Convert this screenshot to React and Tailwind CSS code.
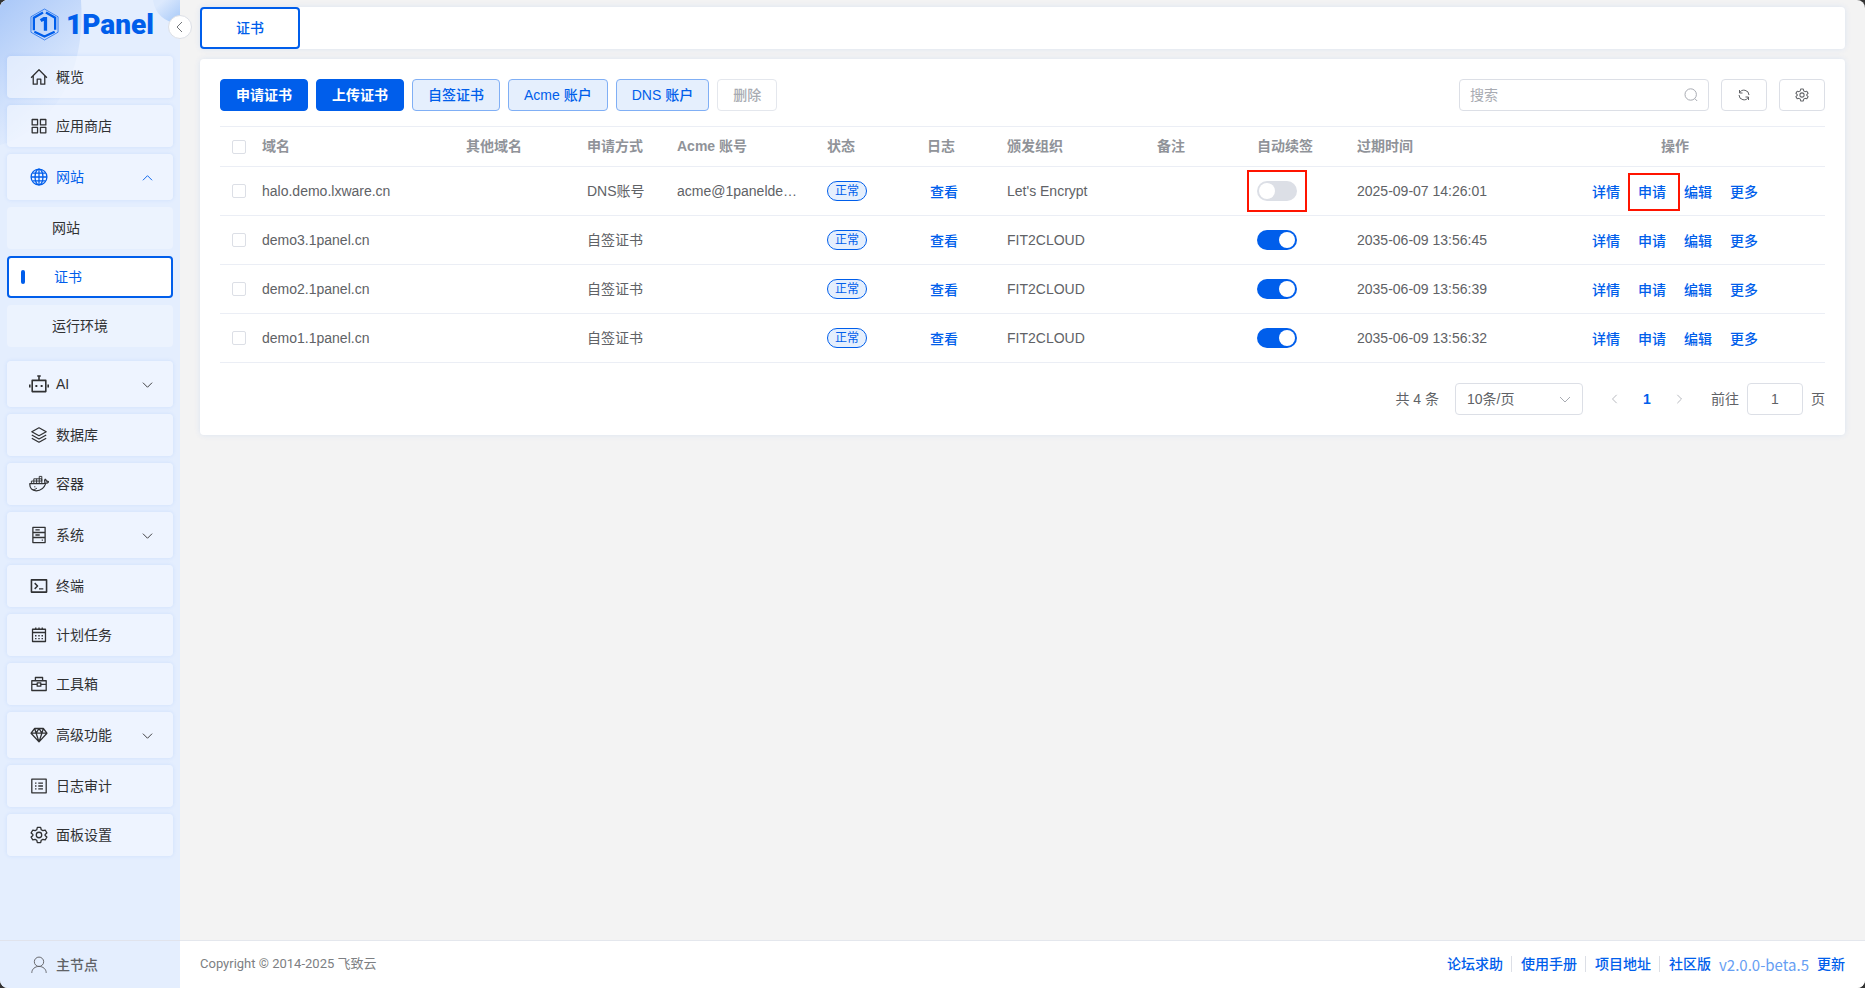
import React, { useState } from 'react';

// Path data for the sidebar icons, all on a 24x24 grid
const icons = {
  home: <path d="M1 13 12 2l11 11M4 10.500V22h5.500v-7h5v7H20V10.500" />,
  apps: <path d="M2.500 3h7.500v7.500H2.500zM14 3h7.500v7.500H14zM2.500 14H10v7.500H2.500zM14 14h7.500v7.500H14z" />,
  globe: (
    <>
      <circle cx="12" cy="12" r="11" />
      <ellipse cx="12" cy="12" rx="5.500" ry="11" />
      <path d="M12 1v22M1 12h22M3 6.500h18M3 17.500h18" />
    </>
  ),
  robot: (
    <>
      <path d="M3.500 7.500h17v14h-17zM12 7.500V2M9.800 2h4.400M0.500 12.500v4M23.500 12.500v4" strokeWidth="2" />
      <path d="M7.500 14.500h2.400M14.100 14.500h2.400" strokeWidth="2.600" />
    </>
  ),
  layers: <path d="M12 2 22 7.500 12 13 2 7.500zM2 12l10 5.500L22 12M2 16.500 12 22l10-5.500" />,
  docker: (
    <>
      <path d="M.5 11.500h17c1.200 0 2-.7 2-2-.8-1.200-.6-2.400.3-3.500 1 .6 1.500 1.400 1.600 2.500 1-.2 1.800 0 2.600.6-.6 1.400-1.800 1.900-3.400 1.800C18.500 17 14.500 20.500 8.500 20.500c-5 0-8.300-3.500-8-9z" strokeWidth="1.500" />
      <path d="M2.500 8.300h13v3h-13zM5.500 5.500h10v3M5.500 5.500v6M9 5.500v6M12.300 2.500v9M12.300 2.500h3.200v6" strokeWidth="1.200" />
      <path d="M6 15.500h1.500M3 19c3 .3 5-.5 6.500-2" strokeWidth="1.200" />
    </>
  ),
  server: (
    <>
      <path d="M3.500 1.500h17v21h-17zM3.500 8.500h17M3.500 15.500h17M7 5h6M7 12h6" />
      <path d="M15.800 19h1.600" />
    </>
  ),
  terminal: (
    <>
      <path d="M1.500 3.500h21v17h-21z" strokeWidth="2.200" />
      <path d="m6 8 4 4-4 4M12 16h6" strokeWidth="2" />
    </>
  ),
  calendar: (
    <>
      <path d="M3 4h18v17H3zM3 8.500h18M7.500 1.500V5M12 1.500V5M16.500 1.500V5" />
      <path d="M6.500 13h2M11 13h2M15.500 13h2M6.500 17h2M11 17h2M15.500 17h2" strokeWidth="2" />
    </>
  ),
  toolbox: <path d="M2 7.500h20V21H2zM7 7.500V3h10v4.500M2 12.500h7.500M14.500 12.500H22M9.500 10.500h5v4.500h-5z" />,
  diamond: <path d="M6 3h12l5 6.500L12 21.500 1 9.500zM1 9.500h22M8 9.500 12 21.500l4-12M6 3l2 6.500L12 3l4 6.500L18 3" />,
  logs: (
    <>
      <path d="M2 2.500h20v19H2z" />
      <path d="M11 8h6.500M11 12h6.500M11 16h6.500M6.500 8h2M6.500 12h2M6.500 16h2" />
    </>
  ),
  gear: (
    <>
      <path d="m9.700 1.500-.8 3.200-2.300 1.300-3.200-.9-2.300 4 2.400 2.200v1.400L1.100 14.900l2.300 4 3.200-.9 2.300 1.300.8 3.200h4.600l.8-3.200 2.300-1.300 3.200.9 2.300-4-2.400-2.200v-1.400l2.400-2.200-2.300-4-3.200.9-2.300-1.300-.8-3.200z" />
      <circle cx="12" cy="12" r="3.800" />
    </>
  ),
  user: (
    <>
      <circle cx="12" cy="7.500" r="6.500" />
      <path d="M2 23c0-5.500 4.500-9 10-9s10 3.500 10 9" />
    </>
  ),
};

const Icon = ({ name, className = 'size-[18px]', strokeWidth = 1.8 }) => (
  <svg
    viewBox="-0.5 0 25 24"
    className={`${className} shrink-0`}
    fill="none"
    stroke="currentColor"
    strokeWidth={strokeWidth}
    strokeLinejoin="round"
    aria-hidden="true"
  >
    {icons[name]}
  </svg>
);

const Chevron = ({ direction, className = 'size-3' }) => {
  const paths = {
    up: 'M1 9l5-5 5 5',
    down: 'M1 4l5 5 5-5',
    left: 'M8 1L3 6l5 5',
    right: 'M4 1l5 5-5 5',
  };
  return (
    <svg viewBox="0 0 12 12" className={`${className} shrink-0`} fill="none" stroke="currentColor" aria-hidden="true">
      <path d={paths[direction]} />
    </svg>
  );
};

const menu = [
  { label: '概览', icon: 'home' },
  { label: '应用商店', icon: 'apps' },
  { label: '网站', icon: 'globe', open: true, children: ['网站', '证书', '运行环境'] },
  { label: 'AI', icon: 'robot', wide: true, expandable: true },
  { label: '数据库', icon: 'layers' },
  { label: '容器', icon: 'docker', wide: true },
  { label: '系统', icon: 'server', expandable: true },
  { label: '终端', icon: 'terminal' },
  { label: '计划任务', icon: 'calendar' },
  { label: '工具箱', icon: 'toolbox' },
  { label: '高级功能', icon: 'diamond', expandable: true },
  { label: '日志审计', icon: 'logs' },
  { label: '面板设置', icon: 'gear' },
];

const initialRows = [
  { domain: 'halo.demo.lxware.cn', type: 'DNS账号', acme: 'acme@1panelde…', org: "Let's Encrypt", renew: false, expire: '2025-09-07 14:26:01' },
  { domain: 'demo3.1panel.cn', type: '自签证书', acme: '', org: 'FIT2CLOUD', renew: true, expire: '2035-06-09 13:56:45' },
  { domain: 'demo2.1panel.cn', type: '自签证书', acme: '', org: 'FIT2CLOUD', renew: true, expire: '2035-06-09 13:56:39' },
  { domain: 'demo1.1panel.cn', type: '自签证书', acme: '', org: 'FIT2CLOUD', renew: true, expire: '2035-06-09 13:56:32' },
];

const itemClass = 'flex w-full items-center rounded bg-[#f5f8ff]/60 shadow-[0_0_4px_rgba(0,94,235,0.1)]';

function Logo() {
  return (
    <div className="flex h-[49px] items-center gap-[7px] pl-[30px] text-[#005eeb]">
      <svg viewBox="0 0 30 34" className="h-[33px] w-[29px]" fill="none" stroke="currentColor" aria-hidden="true">
        <path d="M15 1 29 9v16l-14 8L1 25V9z" strokeWidth="0.700" />
        <path d="M16.500 4.500 26 10v12.500M13.500 4.500 4 10v13M4.500 24.500l10.500 5 10.500-5" strokeWidth="2.400" />
        <path d="M11 13 14.500 11h1.500v12.500" strokeWidth="3.400" />
      </svg>
      <span className="font-['Roboto',sans-serif] text-[28px] leading-8 font-black">1Panel</span>
    </div>
  );
}

function Sidebar() {
  return (
    <aside className="relative flex w-[180px] shrink-0 flex-col bg-[#e4eefe]">
      <svg viewBox="0 0 180 160" className="absolute top-0 left-0 w-full" aria-hidden="true">
        <defs>
          <linearGradient id="glow" x1="0" y1="0" x2="0.500" y2="1">
            <stop offset="0" stopColor="#aac8f8" />
            <stop offset="0.900" stopColor="#e4eefe" />
          </linearGradient>
          <linearGradient id="dot" x1="0" y1="0" x2="1" y2="1">
            <stop offset="0.200" stopColor="#dce9fd" />
            <stop offset="1" stopColor="#a3c7f8" />
          </linearGradient>
        </defs>
        <path d="M0 0H81C84 45 74 90 42 120C28 134 12 142 0 145z" fill="url(#glow)" />
        <path d="M153 0C155 14 164 22 180 24V0z" fill="url(#dot)" />
      </svg>
      <div className="relative flex flex-1 flex-col">
        <Logo />
        <nav className="flex flex-col gap-[7px] p-[7px]">
          {menu.map((item) => (
            <React.Fragment key={item.label}>
              <button
                type="button"
                className={`${itemClass} ${item.open || item.expandable ? 'h-[46px]' : 'h-[42px]'} gap-2 pr-5 pl-[23px] ${
                  item.open ? 'text-[#005eeb]' : 'text-[#303133]'
                }`}
              >
                <Icon name={item.icon} className={item.wide ? '-mx-px size-5' : 'size-[18px]'} />
                <span className="flex-1 text-left">{item.label}</span>
                {(item.open || item.expandable) && (
                  <Chevron direction={item.open ? 'up' : 'down'} className="size-[11px]" />
                )}
              </button>
              {item.children && (
                <div className="mb-[7px] flex flex-col gap-[7px]">
                  {item.children.map((child) =>
                    child === '证书' ? (
                      <button
                        key={child}
                        type="button"
                        className="flex h-[42px] w-full items-center rounded border-2 border-[#005eeb] bg-white pl-3 text-[#005eeb]"
                      >
                        <span className="mr-[29px] h-3.5 w-1 rounded-sm bg-[#005eeb]" />
                        {child}
                      </button>
                    ) : (
                      <button
                        key={child}
                        type="button"
                        className="flex h-[42px] w-full items-center rounded bg-[#ecf3fe] pl-[45px] text-[#303133]"
                      >
                        {child}
                      </button>
                    )
                  )}
                </div>
              )}
            </React.Fragment>
          ))}
        </nav>
      </div>
      <button type="button" className="relative flex h-12 items-center gap-2 border-t border-[#e0e3ec] pl-[30px] font-medium text-[#606266]">
        <Icon name="user" strokeWidth={1.3} />
        主节点
      </button>
      <button
        type="button"
        aria-label="收起菜单"
        className="absolute top-[15px] -right-3 flex size-6 items-center justify-center rounded-full border border-[#dcdfe6] bg-white text-[#73767a]"
      >
        <Chevron direction="left" />
      </button>
    </aside>
  );
}

function Toolbar() {
  const plain = 'h-8 rounded border border-[#80aff5] bg-[#e5effd] px-[15px] font-medium text-[#005eeb]';
  const primary = 'h-8 rounded border border-[#005eeb] bg-[#005eeb] px-[15px] font-bold text-white';
  const square = 'flex h-8 w-[46px] items-center justify-center rounded border border-[#dcdfe6] bg-white text-[#606266]';

  return (
    <div className="flex flex-wrap items-center justify-between gap-3">
      <div className="flex gap-2">
        <button type="button" className={primary}>申请证书</button>
        <button type="button" className={primary}>上传证书</button>
        <button type="button" className={plain}>自签证书</button>
        <button type="button" className={plain}>Acme 账户</button>
        <button type="button" className={plain}>DNS 账户</button>
        <button type="button" disabled className="h-8 rounded border border-[#e4e7ed] bg-white px-[15px] font-medium text-[#a8abb2]">
          删除
        </button>
      </div>
      <div className="flex gap-3">
        <label className="flex h-8 w-[250px] items-center rounded border border-[#dcdfe6] px-2.5 text-[#a8abb2]">
          <input
            type="text"
            placeholder="搜索"
            aria-label="搜索"
            className="min-w-0 flex-1 text-[#606266] outline-none placeholder:text-[#a8abb2]"
          />
          <svg viewBox="0 0 14 14" className="size-3.5" fill="none" stroke="currentColor" aria-hidden="true">
            <circle cx="6.700" cy="6.500" r="5.700" />
            <path d="m10.800 10.600 2.400 2.400" />
          </svg>
        </label>
        <button type="button" className={square} aria-label="刷新">
          <svg viewBox="0 0 14 14" className="size-3.5" fill="none" stroke="currentColor" aria-hidden="true">
            <path d="M2.500 2v3H5.500M2.500 5A5 5 0 0 1 12 7M11.500 12V9H8.500M11.500 9A5 5 0 0 1 2 7" />
          </svg>
        </button>
        <button type="button" className={square} aria-label="表格设置">
          <Icon name="gear" className="size-3.5" />
        </button>
      </div>
    </div>
  );
}

function Switch({ checked, onChange, label }) {
  return (
    <label className="relative block h-5 w-10">
      <input type="checkbox" role="switch" aria-label={label} checked={checked} onChange={onChange} className="peer sr-only" />
      <span className="absolute inset-0 rounded-full bg-[#dcdfe6] peer-checked:bg-[#005eeb]" />
      <span className="absolute top-0.5 left-0.5 size-4 rounded-full bg-white peer-checked:left-[22px]" />
    </label>
  );
}

const checkboxClass = 'block size-3.5 appearance-none rounded-xs border border-[#dcdfe6] bg-white checked:bg-[#005eeb]';

function CertificateTable() {
  const [rows, setRows] = useState(initialRows);

  const toggleRenew = (domain) => {
    setRows(rows.map((row) => (row.domain === domain ? { ...row, renew: !row.renew } : row)));
  };

  return (
    <table className="mt-[15px] w-full table-fixed border-t border-[#ebeef5] text-left text-[#606266]">
      <colgroup>
        <col className="w-[30px]" />
        <col />
        <col className="w-[121px]" />
        <col className="w-[90px]" />
        <col className="w-[150px]" />
        <col className="w-[100px]" />
        <col className="w-20" />
        <col className="w-[150px]" />
        <col className="w-[100px]" />
        <col className="w-[100px]" />
        <col className="w-[180px]" />
        <col className="w-[300px]" />
      </colgroup>
      <thead>
        <tr className="h-10 border-b border-[#ebeef5] text-[#909399]">
          <th className="pl-3">
            <input type="checkbox" aria-label="全选" className={checkboxClass} />
          </th>
          {['域名', '其他域名', '申请方式', 'Acme 账号', '状态', '日志', '颁发组织', '备注', '自动续签', '过期时间'].map((title) => (
            <th key={title} className="px-3 pb-0.5 font-bold whitespace-nowrap">{title}</th>
          ))}
          <th className="px-3 pb-0.5 text-center font-bold">操作</th>
        </tr>
      </thead>
      <tbody>
        {rows.map((row, index) => (
          <tr key={row.domain} className="h-[49px] border-b border-[#ebeef5]">
            <td className="pl-3">
              <input type="checkbox" aria-label={row.domain} className={checkboxClass} />
            </td>
            <td className="truncate px-3">{row.domain}</td>
            <td />
            <td className="px-3 whitespace-nowrap">{row.type}</td>
            <td className="px-3 whitespace-nowrap">{row.acme}</td>
            <td className="px-3">
              <span className="flex h-5 w-10 items-center justify-center rounded-full border border-[#005eeb] bg-[#e5effd] text-xs text-[#005eeb]">
                正常
              </span>
            </td>
            <td className="px-[15px]">
              <button type="button" className="block pt-px font-medium text-[#005eeb]">查看</button>
            </td>
            <td className="truncate px-3">{row.org}</td>
            <td />
            <td className="relative px-3">
              <Switch checked={row.renew} label={`${row.domain} 自动续签`} onChange={() => toggleRenew(row.domain)} />
              {index === 0 && <span className="pointer-events-none absolute top-[3px] left-0.5 h-[42px] w-[60px] border-2 border-[#ff1400]" />}
            </td>
            <td className="px-3 whitespace-nowrap">{row.expire}</td>
            <td className="px-3">
              <div className="flex justify-center gap-[18px] pt-px font-medium text-[#005eeb]">
                <button type="button">详情</button>
                <button type="button" className="relative">
                  申请
                  {index === 0 && <span className="pointer-events-none absolute -inset-y-[9px] -right-3.5 -left-2.5 border-2 border-[#ff1400]" />}
                </button>
                <button type="button">编辑</button>
                <button type="button">更多</button>
              </div>
            </td>
          </tr>
        ))}
      </tbody>
    </table>
  );
}

function Pagination() {
  return (
    <div className="mt-5 flex items-center justify-end text-[#606266]">
      <span className="mr-4">共 4 条</span>
      <div className="relative mr-4 w-32">
        <select aria-label="每页条数" className="h-8 w-full appearance-none rounded border border-[#dcdfe6] bg-white px-[11px]">
          <option>10条/页</option>
          <option>20条/页</option>
          <option>50条/页</option>
        </select>
        <span className="pointer-events-none absolute top-2.5 right-3 text-[#a8abb2]">
          <Chevron direction="down" />
        </span>
      </div>
      <button type="button" aria-label="上一页" disabled className="flex size-8 items-center justify-center text-[#a8abb2]">
        <Chevron direction="left" className="size-2.5" />
      </button>
      <button type="button" className="size-8 font-bold text-[#005eeb]">1</button>
      <button type="button" aria-label="下一页" disabled className="flex size-8 items-center justify-center text-[#a8abb2]">
        <Chevron direction="right" className="size-2.5" />
      </button>
      <label className="ml-4 flex items-center gap-2">
        前往
        <input type="text" defaultValue="1" className="h-8 w-14 rounded border border-[#dcdfe6] text-center" />
        页
      </label>
    </div>
  );
}

function Footer() {
  return (
    <footer className="flex h-12 items-center justify-between border-t border-[#e4e7ed] bg-white px-5">
      <span className="font-['Roboto','Noto_Sans_CJK_SC',sans-serif] text-[13px] text-[#7d7f83]">Copyright © 2014-2025 飞致云</span>
      <div className="flex items-center font-medium text-[#005eeb]">
        {['论坛求助', '使用手册', '项目地址'].map((text) => (
          <React.Fragment key={text}>
            <a href="#">{text}</a>
            <span className="mr-[9px] ml-2 h-4 w-px bg-[#dcdfe6]" />
          </React.Fragment>
        ))}
        <a href="#">社区版</a>
        <a href="#" className="mx-2 font-['Noto_Sans_CJK_SC',sans-serif] text-[15px] font-normal text-[#669ef3]">v2.0.0-beta.5</a>
        <a href="#">更新</a>
      </div>
    </footer>
  );
}

export default function App() {
  return (
    <div className="bg-[#333]">
      <div className="flex min-h-screen overflow-hidden rounded-lg bg-[#f3f3f3] font-['Liberation_Sans','Noto_Sans_CJK_SC',sans-serif] text-sm">
        <Sidebar />
        <div className="flex min-w-0 flex-1 flex-col">
          <main className="flex-1 px-5 pt-[7px]">
            <div className="rounded bg-white shadow-[0_0_6px_rgba(0,94,235,0.1)]">
              <button type="button" className="block h-[42px] w-[100px] rounded border-2 border-[#005eeb] bg-white font-medium text-[#005eeb]">
                证书
              </button>
            </div>
            <section className="mt-2.5 rounded bg-white p-5 shadow-[0_0_6px_rgba(0,94,235,0.1)]">
              <Toolbar />
              <CertificateTable />
              <Pagination />
            </section>
          </main>
          <Footer />
        </div>
      </div>
    </div>
  );
}
